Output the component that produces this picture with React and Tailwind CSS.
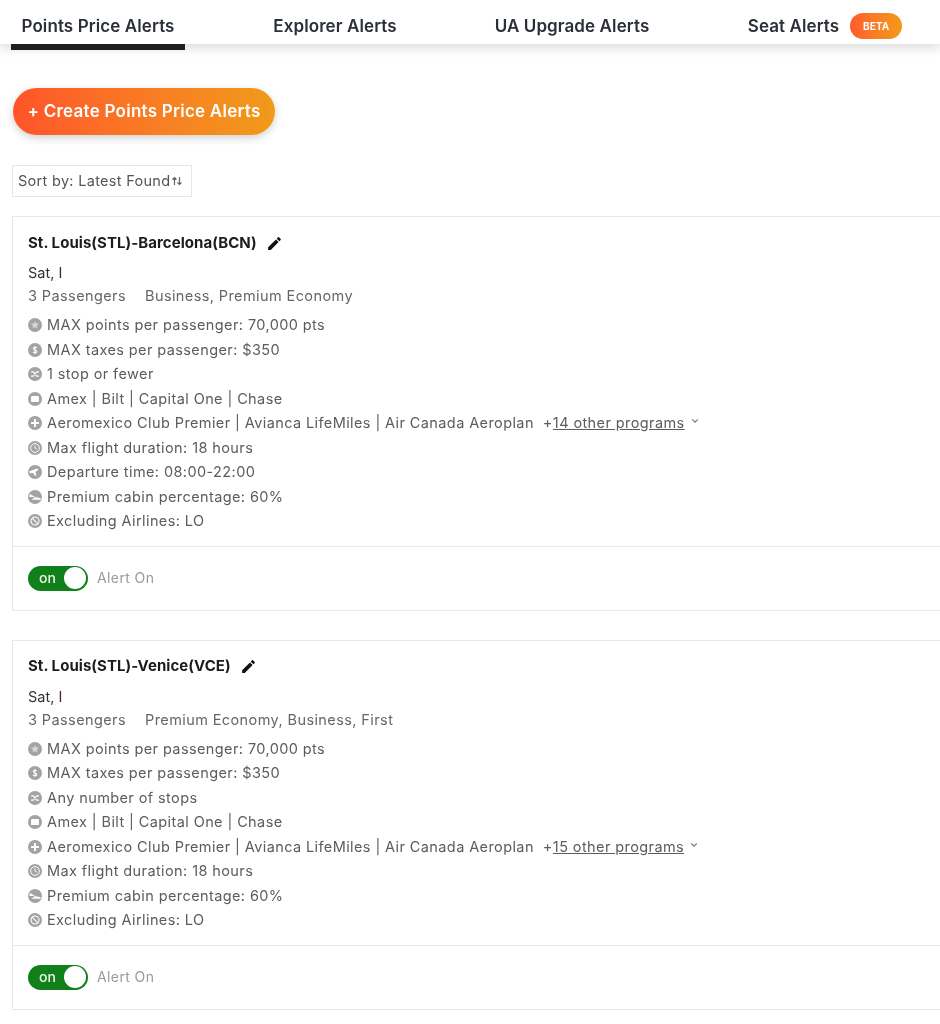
import React from 'react';

const font = { fontFamily: 'Inter, "Open Sans", sans-serif' };

// small gray round icons in front of every filter row
const icons = {
  star: <path d="M8 3.400l1.400 2.900 3.100.4-2.300 2.100.6 3.100L8 10.300l-2.800 1.600.6-3.100-2.300-2.100 3.100-.4z" fill="#fff" fillOpacity="0.55" />,
  dollar: <path d="M10 5.600C9.400 5 8.800 4.800 8 4.800c-1.100 0-1.900.6-1.900 1.500 0 2 3.900 1.200 3.900 3.300 0 .9-.9 1.600-2 1.600-.9 0-1.700-.3-2.200-1M8 3.500v9" stroke="#fff" strokeWidth="1.200" fill="none" />,
  stops: <path d="M3.500 5.500h2.500l4 5h2.500M3.500 10.500h2.500l4-5h2.500" stroke="#fff" strokeWidth="1.300" fill="none" />,
  card: <rect x="3.500" y="4.500" width="9" height="7" rx="1" fill="#fff" />,
  plus: <path d="M8 3.500v9M3.500 8h9" stroke="#fff" strokeWidth="2.200" />,
  clock: <><circle cx="8" cy="8" r="5" fill="none" stroke="#fff" strokeWidth="1.100" /><path d="M8 5v3l2.200 1.500" stroke="#fff" strokeWidth="1" fill="none" /></>,
  plane: <path d="M1.500 7l9-3 1.500 1.500-3.500 2.500 1 4-1.500.5-2-3.500-4 .5z" fill="#fff" />,
  pie: <path d="M8 8H1.500a6.500 6.500 0 0 1 1-3.500L8 8zM8 8l6.500 1.500v1.500H4z" fill="#fff" />,
  ban: <><circle cx="8" cy="8" r="4.600" fill="none" stroke="#fff" strokeWidth="1.200" /><path d="M4.800 4.800l6.400 6.400" stroke="#fff" strokeWidth="1.200" /></>,
};

const RowIcon = ({ name }) => (
  <svg viewBox="0 0 16 16" className="w-[14px] h-[14px] shrink-0">
    <circle cx="8" cy="8" r="8" fill="#a3a3a3" />
    {icons[name]}
  </svg>
);

const Tab = ({ label, active, wide, badge }) => (
  <div className={`relative z-10 h-[50px] ${wide ? 'w-[206px]' : 'w-[174px]'} ${active ? 'border-b-[6px] border-[#1f1f1f]' : ''}`}>
    <div className="h-[44px] flex items-center justify-center gap-[11px] pt-[9px] text-[17px] font-semibold tracking-[0.1px] text-[#2b2f38] whitespace-nowrap">
      <span>{label}</span>
      {badge && (
        <span className="w-[52px] h-[26px] -mt-[1px] rounded-full bg-gradient-to-r from-[#ff5a2b] to-[#f29a1a] text-white text-[10px] font-bold flex items-center justify-center">
          {badge}
        </span>
      )}
    </div>
  </div>
);

const AlertCard = ({ title, cabins, rows, programs }) => (
  <div className="w-[940px] border border-[#e8e8e8] bg-white">
    <div className="px-[15px] pt-[16px] pb-[12px]">
      <div className="h-[20px] flex items-center gap-[9px] text-[15px] font-bold tracking-[0.05px] text-[#1c1c1c]">
        <span>{title}</span>
        <svg viewBox="0 0 24 24" className="w-[17px] h-[17px]" fill="#111">
          <path d="M3 17.250V21h3.750L17.810 9.940l-3.750-3.750L3 17.250zM20.710 7.040a1 1 0 0 0 0-1.410l-2.340-2.340a1 1 0 0 0-1.410 0l-1.830 1.830 3.750 3.750 1.830-1.830z" />
        </svg>
      </div>
      <div className="h-[20px] mt-[10px] flex items-center text-[14.500px] text-[#333]">
        Sat,&nbsp;<span className="text-[#4a2a20]">I</span>
      </div>
      <div className="h-[20px] mt-[3px] flex items-center gap-[19px] text-[14.500px] tracking-[0.4px] text-[#666]">
        <span>3 Passengers</span>
        <span>{cabins}</span>
      </div>
      <div className="mt-[7px]">
        {rows.map((r) => (
          <div key={r.text} className="h-[24.500px] flex items-center gap-[5px] text-[14.500px] tracking-[0.4px] text-[#5c5c5c] whitespace-nowrap">
            <RowIcon name={r.icon} />
            <span>{r.text}</span>
            {r.more && (
              <>
                <span className="ml-[4px]">+<span className="underline">{programs}</span></span>
                <svg viewBox="0 0 10 10" className="w-[8px] h-[8px] -mt-[4px] ml-[1px]" fill="none" stroke="#777" strokeWidth="1.500">
                  <path d="M1.500 3l3.500 3.500L8.500 3" />
                </svg>
              </>
            )}
          </div>
        ))}
      </div>
    </div>
    <div className="border-t border-[#e8e8e8] px-[15px] pt-[19px] pb-[19px] flex items-center gap-[9px]">
      <div className="w-[60px] h-[25px] rounded-full bg-[#11801a] flex items-center justify-between pl-[11px] pr-[2px]">
        <span className="text-[14px] font-medium text-[#eef7e6] pb-[2px]">on</span>
        <span className="w-[22px] h-[22px] rounded-full bg-white"></span>
      </div>
      <span className="text-[14px] tracking-[0.4px] text-[#9a9a9a] pb-[2px]">Alert On</span>
    </div>
  </div>
);

const commonTop = [
  { icon: 'star', text: 'MAX points per passenger: 70,000 pts' },
  { icon: 'dollar', text: 'MAX taxes per passenger: $350' },
];
const cards = 'Amex | Bilt | Capital One | Chase';
const progs = 'Aeromexico Club Premier | Avianca LifeMiles | Air Canada Aeroplan';

export default function App() {
  return (
    <div className="w-[940px] h-[1024px] overflow-hidden bg-white blur-[0.3px]" style={font}>
      <div className="h-[44px] bg-white shadow-[0_4px_10px_rgba(0,0,0,0.14)] flex items-start pl-[11px] gap-[63px]">
        <Tab label="Points Price Alerts" active />
        <Tab label="Explorer Alerts" />
        <Tab label="UA Upgrade Alerts" />
        <Tab label="Seat Alerts" wide badge="BETA" />
      </div>

      <div className="pl-[12px] pt-[44px]">
        <button className="ml-[1px] w-[262px] h-[47px] pt-[1px] rounded-full bg-gradient-to-r from-[#ff5329] to-[#f09a1a] text-white text-[17px] font-semibold tracking-[0.25px] shadow-[0_3px_8px_rgba(0,0,0,0.18)] flex items-center justify-center">
          + Create Points Price Alerts
        </button>

        <div className="mt-[30px] w-[180px] h-[32px] border border-[#e6e6e6] flex items-center pl-[5px] gap-[1px] text-[14.500px] tracking-[0.3px] text-[#555]">
          <span>Sort by: Latest Found</span>
          <svg viewBox="0 0 12 12" className="w-[12px] h-[12px]" fill="none" stroke="#666" strokeWidth="1.200">
            <path d="M3.500 10V2.500M1.500 4.500l2-2 2 2M8.500 2v7.500M6.500 7.500l2 2 2-2" />
          </svg>
        </div>

        <div className="mt-[19px]">
          <AlertCard
            title="St. Louis(STL)-Barcelona(BCN)"
            cabins="Business, Premium Economy"
            programs="14 other programs"
            rows={[
              ...commonTop,
              { icon: 'stops', text: '1 stop or fewer' },
              { icon: 'card', text: cards },
              { icon: 'plus', text: progs, more: true },
              { icon: 'clock', text: 'Max flight duration: 18 hours' },
              { icon: 'plane', text: 'Departure time: 08:00-22:00' },
              { icon: 'pie', text: 'Premium cabin percentage: 60%' },
              { icon: 'ban', text: 'Excluding Airlines: LO' },
            ]}
          />
        </div>

        <div className="mt-[29px]">
          <AlertCard
            title="St. Louis(STL)-Venice(VCE)"
            cabins="Premium Economy, Business, First"
            programs="15 other programs"
            rows={[
              ...commonTop,
              { icon: 'stops', text: 'Any number of stops' },
              { icon: 'card', text: cards },
              { icon: 'plus', text: progs, more: true },
              { icon: 'clock', text: 'Max flight duration: 18 hours' },
              { icon: 'pie', text: 'Premium cabin percentage: 60%' },
              { icon: 'ban', text: 'Excluding Airlines: LO' },
            ]}
          />
        </div>
      </div>
    </div>
  );
}
